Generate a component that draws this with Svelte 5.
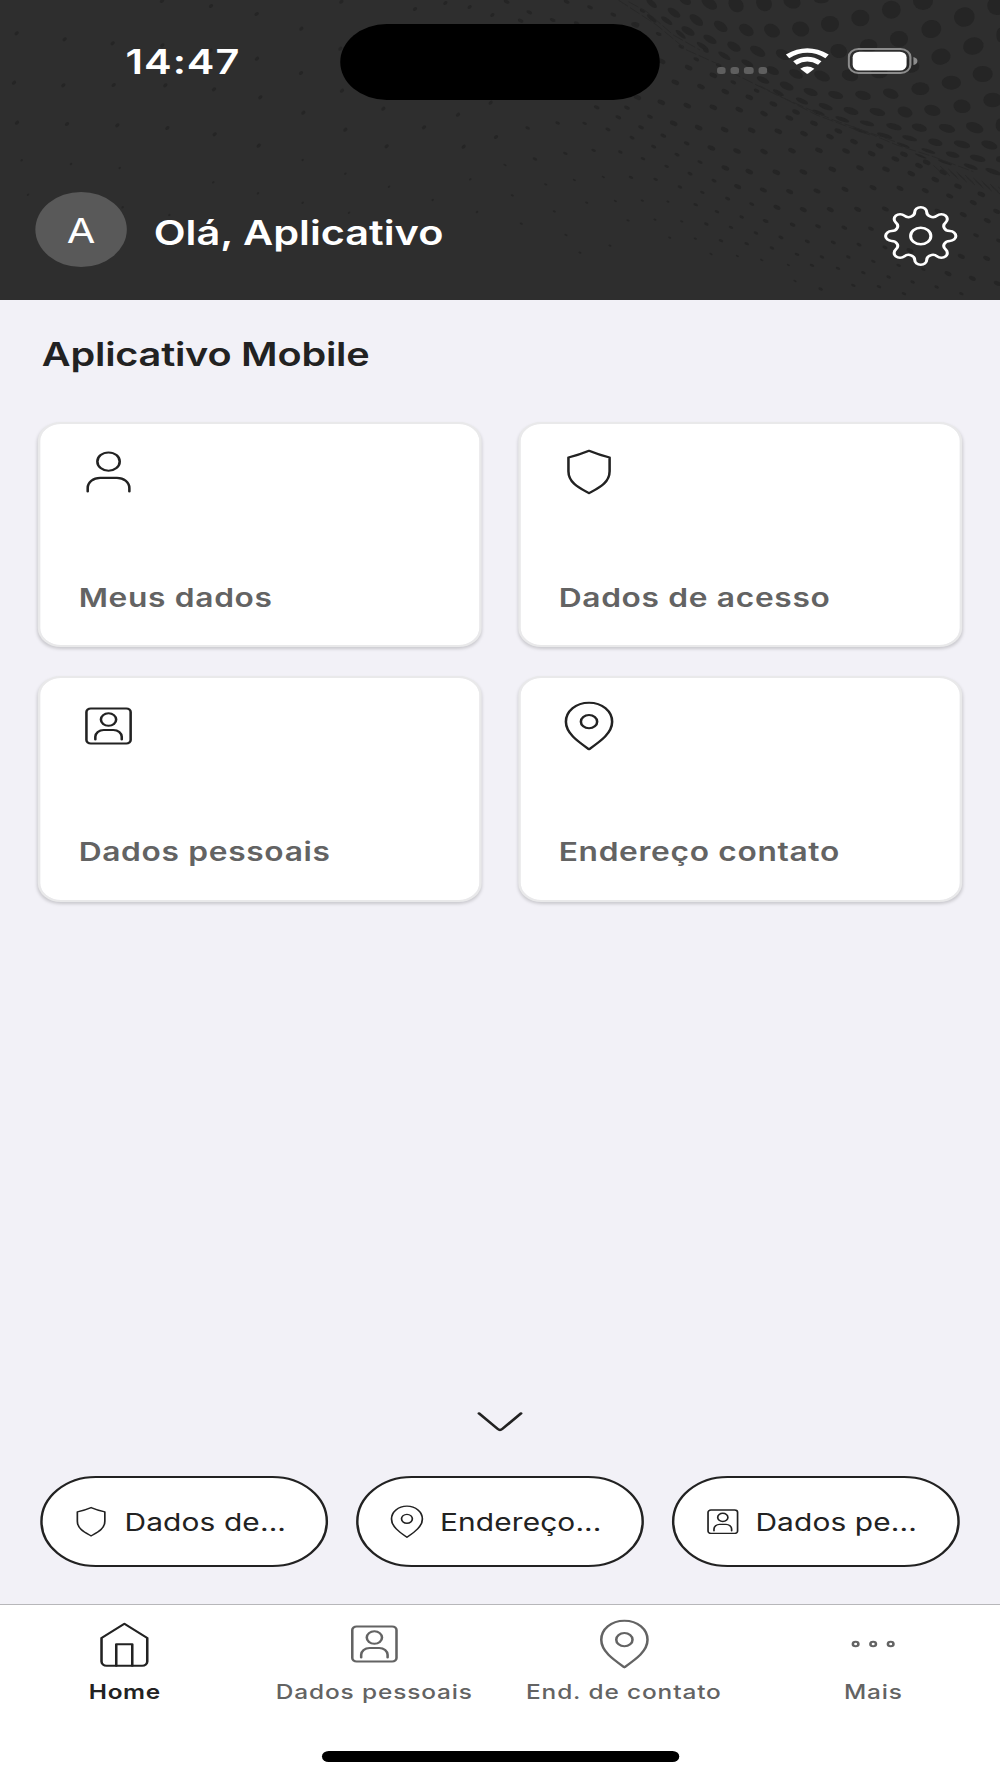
<script>
    // all icons share a 24x24 grid and are drawn as strokes
    const icons = {
        person: [
            "M12 2.6A4.4 4.4 0 1 1 12 11.4A4.4 4.4 0 1 1 12 2.6Z",
            "M3.8 21.3V19.7A4.9 4.9 0 0 1 8.7 14.8H15.3A4.9 4.9 0 0 1 20.2 19.7V21.3"
        ],
        shield: [
            "M12 1.8Q8 3.8 3.9 5V11.6C3.9 17.2 8.2 19.6 12 22.2C15.8 19.6 20.1 17.2 20.1 11.6V5Q16 3.8 12 1.8Z"
        ],
        badge: [
            "M5 3.6H19A1.7 1.7 0 0 1 20.7 5.3V18.7A1.7 1.7 0 0 1 19 20.4H5A1.7 1.7 0 0 1 3.3 18.7V5.3A1.7 1.7 0 0 1 5 3.6Z",
            "M12 5.9A3 3 0 1 1 12 11.9A3 3 0 1 1 12 5.9Z",
            "M6.8 18.5V17.2A3.3 3.3 0 0 1 10.1 13.9H13.9A3.3 3.3 0 0 1 17.2 17.2V18.5"
        ],
        pin: [
            "M12 .8C17.2 .8 21.1 5 21.1 10C21.1 15.6 16.2 19.6 12 23.2C7.8 19.6 2.9 15.6 2.9 10C2.9 5 6.8 .8 12 .8Z",
            "M12 6.7A3.2 3.2 0 1 1 12 13.1A3.2 3.2 0 1 1 12 6.7Z"
        ],
        home: [
            "M12 2.3L3 9.1V20.4A2 2 0 0 0 5 22.4H19A2 2 0 0 0 21 20.4V9.1Z",
            "M8.8 22.4V12.1H15.1V22.4"
        ],
        more: [
            "M5.1 10.9A1.1 1.1 0 1 1 5.1 13.1A1.1 1.1 0 1 1 5.1 10.9Z",
            "M12 10.9A1.1 1.1 0 1 1 12 13.1A1.1 1.1 0 1 1 12 10.9Z",
            "M18.9 10.9A1.1 1.1 0 1 1 18.9 13.1A1.1 1.1 0 1 1 18.9 10.9Z"
        ]
    };

    const cards = [
        { icon: "person", label: "Meus dados" },
        { icon: "shield", label: "Dados de acesso" },
        { icon: "badge", label: "Dados pessoais" },
        { icon: "pin", label: "Endereço contato" }
    ];

    const shortcuts = [
        { icon: "shield", label: "Dados de..." },
        { icon: "pin", label: "Endereço..." },
        { icon: "badge", label: "Dados pe..." }
    ];

    const tabs = [
        { icon: "home", label: "Home", active: true },
        { icon: "badge", label: "Dados pessoais" },
        { icon: "pin", label: "End. de contato" },
        { icon: "more", label: "Mais" }
    ];

    const TEETH = 8;

    function gearPath() {
        const rotate = (x, y, i) => {
            const a = (i * 2 * Math.PI) / TEETH;
            return `${x * Math.cos(a) - y * Math.sin(a)} ${x * Math.sin(a) + y * Math.cos(a)}`;
        };
        let d = `M ${rotate(-4.9, -23.9, 0)}`;
        for (let i = 0; i < TEETH; i++) {
            d += ` A 4.9 4.9 0 0 1 ${rotate(4.9, -23.9, i)} A 5 5 0 0 0 ${rotate(-4.9, -23.9, i + 1)}`;
        }
        return d + "Z";
    }

    // halftone: cx, cy, rx, ry, rotation
    const bigDots = [
        [455, 10, 19, 8, 40], [555, 0, 20, 12, 35], [628, 10, 26, 15, 35], [708, 14, 25, 20, 45], [792, 10, 25, 22, 45], [876, 5, 26, 20, 20], [964, 0, 22, 10, 0],
        [455, 55, 18, 6, 40], [522, 38, 22, 10, 35], [589, 60, 24, 12, 38], [662, 79, 23, 13, 35], [739, 90, 24, 16, 35], [816, 92, 25, 19, 30], [902, 87, 26, 22, 20], [990, 72, 27, 24, 0], [1081, 54, 27, 25, 0], [1174, 29, 28, 27, 0], [1269, 2, 30, 28, 0],
        [500, 62, 20, 7, 35], [564, 93, 22, 10, 30], [630, 118, 22, 10, 30], [702, 140, 22, 12, 30], [773, 154, 25, 13, 30], [850, 164, 24, 14, 25], [1016, 153, 25, 21, 10], [1106, 137, 26, 20, 0], [1197, 117, 27, 24, 0], [1294, 87, 30, 27, -15], [1393, 51, 31, 29, -15], [1490, 17, 28, 28, 0],
        [542, 103, 19, 6, 40], [608, 139, 21, 7, 35], [673, 167, 21, 7, 32], [742, 190, 20, 8, 28], [818, 212, 20, 11, 25], [888, 222, 22, 12, 25], [966, 228, 25, 14, 25], [1050, 226, 25, 17, 15], [1138, 218, 25, 17, 0], [1232, 198, 26, 20, 0], [1323, 170, 29, 24, -10], [1420, 138, 31, 26, -15], [1502, 105, 13, 22, 0],
        [789, 240, 20, 8, 25], [860, 258, 22, 11, 25], [932, 276, 22, 10, 20], [1007, 285, 23, 11, 15], [1089, 286, 24, 13, 15], [1172, 281, 24, 14, 20], [1261, 266, 27, 19, 0], [1354, 248, 29, 21, 0], [1448, 222, 30, 24, 0],
        [835, 278, 18, 6, 28], [906, 303, 20, 7, 25], [977, 320, 22, 8, 20], [1053, 333, 23, 10, 18], [1132, 336, 24, 11, 15], [1215, 336, 23, 15, 20], [1297, 331, 25, 16, 15], [1386, 319, 26, 20, 10], [1478, 300, 28, 22, 0],
        [955, 338, 20, 5, 22], [1027, 358, 22, 6, 20], [1101, 370, 22, 7, 15], [1182, 380, 24, 9, 15], [1258, 383, 23, 11, 15], [1341, 385, 25, 12, 15], [1424, 383, 27, 15, 20], [1502, 375, 15, 20, 0],
        [1080, 392, 22, 4, 20], [1154, 407, 24, 6, 18], [1229, 415, 23, 7, 15], [1306, 427, 22, 10, 15], [1386, 433, 25, 10, 15], [1468, 435, 25, 12, 18],
        [1210, 436, 20, 4, 20], [1285, 453, 22, 5, 18], [1358, 464, 21, 8, 15], [1433, 475, 24, 9, 15], [1500, 478, 12, 9, 10],
        [1262, 468, 18, 3, 22], [1335, 487, 22, 4, 20], [1412, 500, 22, 6, 20], [1480, 515, 25, 7, 20]
    ];

    // smaller rows below the fold: [size, [x, y], ...]
    const dotRows = [
        [9, [428, 32], [476, 102], [544, 140], [618, 152], [589, 178], [656, 196], [700, 247], [770, 272]],
        [12, [405, 75], [485, 184], [566, 203], [640, 226], [526, 247], [603, 260], [676, 275], [748, 292], [820, 312], [888, 336], [942, 370], [1015, 393]],
        [12, [412, 292], [484, 307], [562, 317], [640, 322], [718, 329], [792, 341], [868, 354], [1212, 463], [1280, 487]],
        [12, [521, 370], [596, 383], [674, 389], [755, 391], [835, 394], [912, 401], [990, 410], [1062, 425], [1139, 438]],
        [12, [634, 444], [711, 453], [792, 455], [876, 452], [957, 451], [1038, 453], [1115, 461], [1186, 477], [1257, 497], [1330, 517]],
        [12, [676, 504], [748, 515], [829, 517], [910, 516], [997, 508], [1080, 504], [1158, 508], [1234, 521], [1306, 539], [1374, 559], [1444, 583]],
        [11, [713, 560], [790, 570], [869, 575], [951, 573], [1035, 568], [1119, 563], [1200, 565], [1276, 572], [1349, 588], [1420, 608], [1490, 634]],
        [11, [831, 622], [910, 629], [991, 629], [1073, 628], [1156, 627], [1314, 634], [1390, 644], [1462, 662]],
        [9, [290, 322], [381, 323], [450, 350], [355, 352], [423, 382], [490, 407], [560, 430], [797, 663], [878, 674], [954, 679], [1033, 683], [1113, 686], [1428, 706], [1497, 722]],
        [8, [324, 388], [396, 413], [461, 440], [531, 464], [600, 486], [570, 521], [642, 542], [683, 596], [755, 612], [843, 712], [922, 724], [1000, 727], [1077, 734], [1155, 742]],
        [11, [1230, 752], [1384, 769], [1460, 775], [1344, 821], [1417, 835], [1492, 850]],
        [7, [83, 384], [173, 369], [254, 370], [281, 451], [361, 456], [429, 476], [500, 499], [607, 577], [196, 460], [105, 477], [393, 532], [467, 538], [540, 561]],
        [7, [587, 614], [651, 635], [725, 651], [619, 672], [693, 682], [663, 722], [740, 731], [768, 699], [816, 744], [891, 763], [966, 771], [1045, 771], [1120, 784], [1196, 796], [1270, 808]],
        [7, [936, 796], [1014, 805], [1090, 818], [1166, 831], [1238, 846], [1310, 861], [1384, 881], [962, 867], [1060, 856], [1137, 860], [1212, 881]],
        [5, [15, 495], [137, 553], [223, 540], [310, 531], [37, 586], [163, 634], [260, 608], [346, 603], [427, 602], [504, 605], [64, 671], [198, 705], [384, 661], [465, 659], [545, 664], [240, 758], [330, 737], [509, 713], [586, 716], [633, 762], [712, 768], [785, 780], [865, 795], [885, 843]],
        [9, [20, 5], [88, 37], [158, 60], [200, 5], [270, 22], [340, 44], [410, 72], [62, 62], [230, 70]]
    ];

    // sparse dots on the left half
    const sparseDots = [
        [486, 3], [633, 18], [770, 42], [904, 86], [1024, 5], [1245, 27], [1336, 9], [1409, 21], [1477, 45],
        [50, 100], [194, 118], [338, 130], [487, 136], [632, 152], [771, 176], [903, 219], [1021, 146],
        [42, 248], [190, 256], [341, 255], [496, 256], [642, 268], [781, 292], [910, 338], [1026, 272], [1150, 326], [1374, 344], [1472, 308],
        [51, 368], [201, 372], [352, 376], [502, 384], [644, 403], [776, 437], [908, 480], [1036, 389], [1160, 439], [1272, 382], [1391, 440], [1488, 411],
        [65, 481], [213, 492], [359, 504], [640, 547], [1036, 521], [1167, 560], [1411, 538], [774, 580], [908, 608], [1047, 638], [1298, 600], [1431, 636], [84, 584], [368, 622], [508, 645]
    ];

    // hairlines where the mesh folds over itself
    const foldLines = [
        "M355 0L470 75L560 150L660 195", "M385 5L440 35L520 105L600 150", "M690 215L830 285L1000 360L1200 430",
        "M780 258L950 345L1110 405", "M1060 380L1190 435L1300 470L1420 515"
    ];
    const foldTicks = [1300, 1325, 1350, 1375, 1400, 1425, 1450, 1475];
</script>

{#snippet icon(name)}
    <svg class="icon" viewBox="0 0 24 24">
        {#each icons[name] as d}
            <path {d} />
        {/each}
    </svg>
{/snippet}

<div class="screen">
    <header>
        <svg class="halftone" viewBox="0 0 3000 900" preserveAspectRatio="none">
            {#each sparseDots as [x, y]}
                <ellipse cx={x} cy={y} rx={y > 450 ? 4 : 7} ry={y > 450 ? 3 : 5} transform="rotate(-40 {x} {y})" />
            {/each}
            <g transform="translate(1500 0)">
                {#each bigDots as [x, y, rx, ry, angle]}
                    <ellipse cx={x} cy={y} {rx} {ry} transform="rotate({angle} {x} {y})" />
                {/each}
                {#each dotRows as [size, ...dots]}
                    {#each dots as [x, y]}
                        <ellipse cx={x} cy={y} rx={size} ry={size * 0.56} transform="rotate(25 {x} {y})" />
                    {/each}
                {/each}
                {#each foldLines as d}
                    <path {d} />
                {/each}
                {#each foldTicks as x, i}
                    <path d="M{x} {496 + i * 9}l26 24m-6 -22l26 24" />
                {/each}
            </g>
        </svg>

        <div class="status">
            <div class="time">14:47</div>
            <div class="island"></div>
            <div class="indicators">
                <div class="signal"><i></i><i></i><i></i><i></i></div>
                <svg class="wifi" viewBox="0 0 36 26">
                    <path d="M1.8 8.4Q18 -3.4 34.2 8.4" />
                    <path d="M7.8 15Q18 7.2 28.2 15" />
                    <path class="solid" d="M12.2 20.8Q18 16.4 23.8 20.8L18.7 25.4Q18 26 17.3 25.4Z" />
                </svg>
                <svg class="battery" viewBox="0 0 58 26">
                    <rect class="shell" x="1" y="1" width="50.5" height="24" rx="8" />
                    <rect class="charge" x="4.2" y="3.7" width="44.2" height="18.8" rx="5.5" />
                    <path class="shell-cap" d="M54 9Q57.3 10 57.3 13T54 17Z" />
                </svg>
            </div>
        </div>

        <div class="greeting">
            <div class="avatar">A</div>
            <h1>Olá, Aplicativo</h1>
            <svg class="gear" viewBox="-31 -31 62 62">
                <path d={gearPath()} />
                <circle r="8.3" />
            </svg>
        </div>
    </header>

    <main>
        <h2>Aplicativo Mobile</h2>
        <div class="cards">
            {#each cards as card}
                <div class="card">
                    {@render icon(card.icon)}
                    <span>{card.label}</span>
                </div>
            {/each}
        </div>

        <svg class="chevron" viewBox="0 0 40 20">
            <path d="M2.8 1.4L18.2 17Q20 18.8 21.8 17L37.2 1.4" />
        </svg>
        <div class="shortcuts">
            {#each shortcuts as shortcut}
                <div class="chip">
                    {@render icon(shortcut.icon)}
                    <span>{shortcut.label}</span>
                </div>
            {/each}
        </div>
    </main>

    <nav>
        <div class="tabs">
            {#each tabs as tab}
                <div class="tab" class:active={tab.active}>
                    {@render icon(tab.icon)}
                    <span>{tab.label}</span>
                </div>
            {/each}
        </div>
        <div class="home-indicator"></div>
    </nav>
</div>

<style>
    :global(body) {
        overflow: hidden;
    }

    /* phone layout is 820 wide, stretched sideways to fill the window */
    .screen {
        display: flex;
        flex-direction: column;
        width: 820px;
        height: 1778px;
        transform: scaleX(1.219512);
        transform-origin: 0 0;
        font-family: Inter, "Liberation Sans", sans-serif;
        background: #f2f1f7;
        color: #222;
    }

    .screen * {
        box-sizing: border-box;
    }

    svg {
        display: block;
        flex: none;
        fill: none;
    }

    h1, h2 {
        margin: 0;
        font-weight: 600;
        white-space: nowrap;
    }

    header {
        position: relative;
        height: 300px;
        background: #2e2e2e;
        color: #fff;
    }

    .halftone {
        position: absolute;
        inset: 0;
        width: 100%;
        height: 100%;
    }

    .halftone ellipse {
        fill: #252525;
    }

    .halftone path {
        stroke: #282828;
        stroke-width: 3;
        stroke-dasharray: 34 8;
    }

    .status {
        position: relative;
        display: grid;
        grid-template-columns: 279px 262px 1fr;
        height: 192px;
        padding-top: 23.5px;
        align-items: start;
    }

    .time {
        padding-left: 21px;
        text-align: center;
        font-size: 34px;
        line-height: 76px;
        font-weight: 600;
        letter-spacing: 0.8px;
    }

    .island {
        height: 76.5px;
        border-radius: 39px;
        background: #000;
    }

    .indicators {
        display: flex;
        align-items: flex-end;
        padding: 24.5px 0 0 47px;
    }

    .signal {
        display: flex;
        gap: 4px;
        margin-right: 15px;
    }

    .signal i {
        width: 7.2px;
        height: 7px;
        border-radius: 2.5px;
        background: #5f5f5f;
    }

    .wifi {
        width: 36px;
        height: 26px;
        margin-right: 15px;
    }

    .wifi path {
        stroke: #fff;
        stroke-width: 4.6;
    }

    .wifi .solid {
        fill: #fff;
        stroke: none;
    }

    .battery {
        width: 58px;
        height: 26px;
    }

    .shell {
        stroke: #8c8c8c;
        stroke-width: 1.8;
    }

    .charge {
        fill: #fff;
    }

    .shell-cap {
        fill: #8c8c8c;
    }

    .greeting {
        position: relative;
        display: flex;
        align-items: center;
        height: 75px;
        padding: 0 33.7px 0 29px;
    }

    .avatar {
        width: 75px;
        height: 75px;
        margin-right: 22px;
        border-radius: 50%;
        background: #595959;
        font-size: 34px;
        line-height: 77px;
        text-align: center;
    }

    h1 {
        padding-top: 6px;
        font-size: 34px;
    }

    .gear {
        width: 62px;
        height: 62px;
        margin: 13px 0 0 auto;
        stroke: #fff;
        stroke-width: 2.5;
    }

    main {
        flex: 1;
        display: flex;
        flex-direction: column;
    }

    h2 {
        padding: 35px 0 0 34.3px;
        font-size: 32.5px;
        line-height: 40px;
        letter-spacing: -0.17px;
    }

    .cards {
        display: grid;
        grid-template-columns: 1fr 1fr;
        gap: 28.7px 29.3px;
        padding: 46.5px 31px 0;
    }

    .card {
        display: flex;
        flex-direction: column;
        justify-content: space-between;
        height: 225.7px;
        padding: 23px 31px 31.3px 31.5px;
        border: 2.5px solid #e9e9ea;
        border-radius: 19px;
        background: #fff;
        background-clip: padding-box;
        box-shadow: 0 2px 3px rgba(0, 0, 0, 0.17);
        color: #636363;
        font-size: 26px;
        line-height: 32px;
        font-weight: 600;
        letter-spacing: 0.55px;
    }

    .card .icon {
        margin-left: -0.5px;
    }

    .icon {
        width: 50px;
        height: 50px;
        stroke: #222;
        stroke-width: 1;
        stroke-linecap: round;
        stroke-linejoin: round;
    }

    .chevron {
        width: 40px;
        height: 20px;
        margin: auto auto 0;
        stroke: #222;
        stroke-width: 2.4;
        stroke-linecap: round;
    }

    .shortcuts {
        display: grid;
        grid-template-columns: repeat(3, 1fr);
        gap: 22.8px;
        padding: 44px 33.4px 37px;
    }

    .chip {
        display: flex;
        align-items: center;
        gap: 10.3px;
        height: 91.5px;
        padding-left: 23px;
        border: 2.2px solid #222;
        border-radius: 46px;
        background: #fff;
        font-size: 24.5px;
        letter-spacing: 0.1px;
        white-space: nowrap;
    }

    .chip span {
        padding-top: 1px;
    }

    .chip .icon {
        width: 33.4px;
        height: 33.4px;
    }

    nav {
        height: 174px;
        border-top: 1px solid #b7b7ba;
        background: #fff;
    }

    .tabs {
        display: grid;
        grid-template-columns: repeat(4, 1fr);
        height: 145.5px;
        padding: 14px 1.5px 0 0;
    }

    .tab {
        display: flex;
        flex-direction: column;
        align-items: center;
        color: #636363;
        font-size: 20px;
        line-height: 24px;
        font-weight: 500;
        letter-spacing: 0.72px;
        white-space: nowrap;
    }

    .tab .icon {
        margin-bottom: 11px;
        stroke: #636363;
    }

    .tab.active {
        color: #222;
        font-weight: 600;
        letter-spacing: 0.5px;
    }

    .tab.active .icon {
        stroke: #222;
    }

    .home-indicator {
        width: 293px;
        height: 11px;
        margin: 0 auto;
        border-radius: 6px;
        background: #000;
    }
</style>
